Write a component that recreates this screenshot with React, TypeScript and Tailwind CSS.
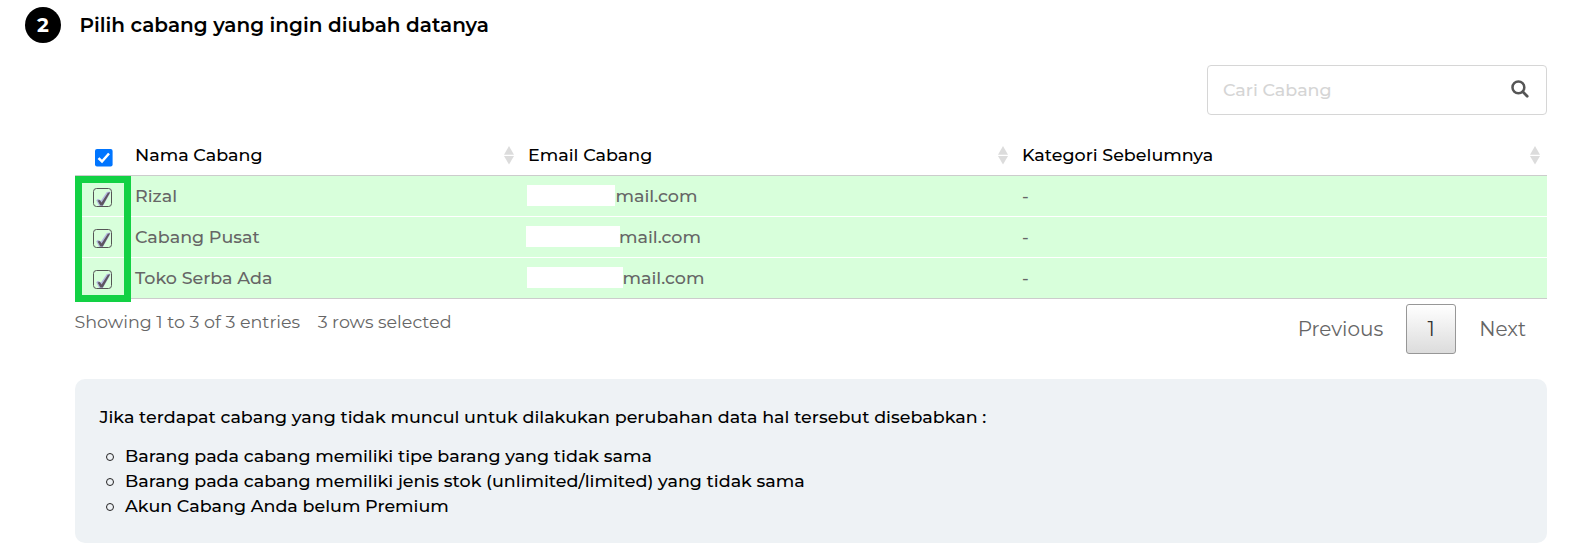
import React from "react";

type Branch = {
  name: string;
  email: string;
  category: string;
  mask: string;
};

const branches: Branch[] = [
  { name: "Rizal", email: "mail.com", category: "-", mask: "ml-[-1px] w-[88px] mr-[0.5px]" },
  { name: "Cabang Pusat", email: "mail.com", category: "-", mask: "ml-[-2px] w-[94px] mr-[-1px]" },
  { name: "Toko Serba Ada", email: "mail.com", category: "-", mask: "ml-[-1px] w-[96px] mr-[-0.5px]" },
];

const reasons = [
  "Barang pada cabang memiliki tipe barang yang tidak sama",
  "Barang pada cabang memiliki jenis stok (unlimited/limited) yang tidak sama",
  "Akun Cabang Anda belum Premium",
];

function SortIcon() {
  return (
    <svg className="mt-px h-[19px] w-[10px] shrink-0" viewBox="0 0 10 19" fill="#dcdcdc">
      <path d="M5 0 10 8.7H0Z" />
      <path d="M5 18.6 10 10H0Z" />
    </svg>
  );
}

function HeaderCheckbox() {
  return (
    <svg className="h-[18px] w-[18px]" viewBox="0 0 18 18">
      <rect width="17.6" height="17.4" rx="2" fill="#0075ff" />
      <path d="M3.5 9.1 7 12.5 14 4.5" fill="none" stroke="#fff" strokeWidth="2.5" />
    </svg>
  );
}

function RowCheckbox() {
  return (
    <svg className="h-[20px] w-[20px]" viewBox="0 0 20 20">
      <rect x="0.5" y="0.5" width="18" height="18" rx="3" fill="none" stroke="#555" />
      <path d="M3.2 12.2 5 10.8 8 12.6 13.8 4 17.6 3.4 16.5 6.5 9.8 18H6.2Z" fill="#b4b9de" />
      <path d="M4.6 12.4 6.8 12 8.6 14.4 14.9 4.8 17.2 4.2 9.8 17.6 7.4 17.6Z" fill="#5d5560" />
    </svg>
  );
}

export default function App() {
  return (
    <main className="h-[557px] w-[1570px] overflow-hidden bg-white pl-[25px] pr-[23px] pt-[7px] font-['Montserrat','Inter',sans-serif] text-[17.5px] text-black">
      <div className="flex h-9 items-center">
        <span className="flex h-9 w-9 items-center justify-center rounded-full bg-black text-[20px] font-bold text-white">
          2
        </span>
        <h1 className="ml-[18.5px] text-[20px] font-semibold">Pilih cabang yang ingin diubah datanya</h1>
      </div>

      <section className="ml-[50px]">
        <div className="mt-[22px] flex justify-end">
          <div className="flex h-[50px] w-[340px] items-center justify-between rounded border border-[#d6d6d6] pl-[15px] pr-[17px]">
            <span className="font-medium text-[#d5d5d5]">Cari Cabang</span>
            <svg className="mt-[-2px] h-[18px] w-[18px]" viewBox="0 0 18 18" fill="none" stroke="#555">
              <circle cx="7.4" cy="7.4" r="5.9" strokeWidth="2.5" />
              <path d="m11.8 11.8 4.4 4.4" strokeWidth="2.8" strokeLinecap="round" />
            </svg>
          </div>
        </div>

        <div className="relative mt-5">
          <div className="grid h-[41px] grid-cols-[60px_393px_494px_1fr] items-center border-b border-[#ccc] font-medium">
            <div className="self-start pl-5 pt-[14px]">
              <HeaderCheckbox />
            </div>
            <div className="flex items-center justify-between pr-[14px]">
              Nama Cabang
              <SortIcon />
            </div>
            <div className="flex items-center justify-between pr-[14px]">
              Email Cabang
              <SortIcon />
            </div>
            <div className="flex items-center justify-between pr-[7px]">
              Kategori Sebelumnya
              <SortIcon />
            </div>
          </div>
          {branches.map((b) => (
            <div
              key={b.name}
              className="grid h-[41px] grid-cols-[60px_393px_494px_1fr] items-center border-b border-white bg-[#d8ffdb] font-medium text-[#666] last-of-type:border-[#ccc]"
            >
              <div className="self-start pl-[18px] pt-3">
                <RowCheckbox />
              </div>
              <div>{b.name}</div>
              <div className="flex items-center">
                <span className={`mt-[-1px] h-[21px] bg-white ${b.mask}`} />
                {b.email}
              </div>
              <div>{b.category}</div>
            </div>
          ))}
          <span className="absolute left-0 top-[41px] h-[126px] w-[56px] border-[7px] border-[#12d144]" />
        </div>

        <div className="flex h-[80px] justify-between text-[#666]">
          <div className="ml-[-0.5px] flex gap-[17.5px] pt-[10px]">
            <span>Showing 1 to 3 of 3 entries</span>
            <span>3 rows selected</span>
          </div>
          <div className="mt-[5px] flex h-[50px] items-center pr-[21px] text-[20px]">
            <span>Previous</span>
            <span className="ml-[23px] mr-[23px] flex h-[50px] w-[50px] shrink-0 items-center justify-center rounded-[3px] border border-[#979797] bg-linear-to-b from-white to-[#dcdcdc] text-[#333]">
              1
            </span>
            <span>Next</span>
          </div>
        </div>

        <div className="h-[164px] rounded-[10px] bg-[#eef2f5] pl-[24.5px] pr-6 pt-[25px] font-medium">
          <p className="leading-[25px]">
            Jika terdapat cabang yang tidak muncul untuk dilakukan perubahan data hal tersebut disebabkan :
          </p>
          <ul className="mt-[14px] leading-[25px]">
            {reasons.map((reason) => (
              <li key={reason} className="flex items-center">
                <span className="ml-[6.5px] mr-[11px] mt-[3px] h-[8px] w-[8px] rounded-full border border-[#222]" />
                {reason}
              </li>
            ))}
          </ul>
        </div>
      </section>
    </main>
  );
}
